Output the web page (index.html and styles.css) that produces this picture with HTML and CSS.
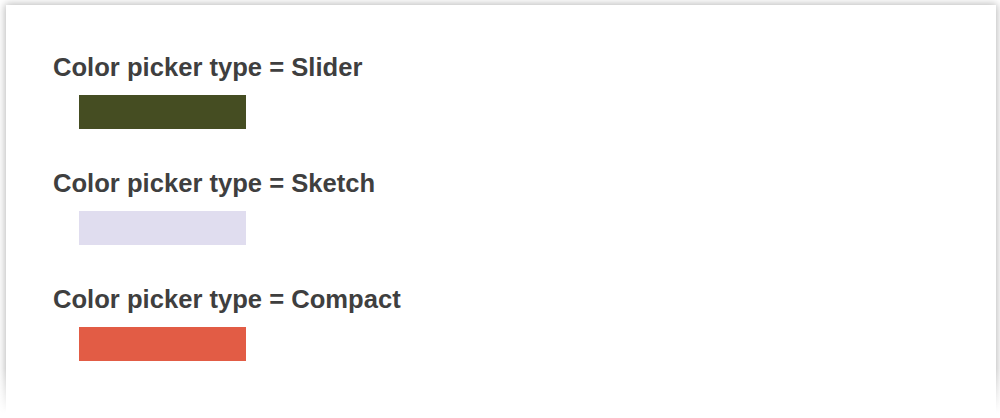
FILE: index.html
```html
<!DOCTYPE html>
<html>
<head>
<meta charset="utf-8">
<link rel="stylesheet" href="styles.css">
</head>
<body>
<div class="card">
  <section class="block">
    <h2 class="title">Color picker type = Slider</h2>
    <div class="swatch swatch-olive"></div>
  </section>
  <section class="block">
    <h2 class="title">Color picker type = Sketch</h2>
    <div class="swatch swatch-lavender"></div>
  </section>
  <section class="block">
    <h2 class="title">Color picker type = Compact</h2>
    <div class="swatch swatch-coral"></div>
  </section>
</div>
<div class="fade"></div>
</body>
</html>
```
FILE: styles.css
```css
html, body {
  margin: 0;
  padding: 0;
  background: #ffffff;
  overflow: hidden;
}
body {
  font-family: "Liberation Sans", Arial, sans-serif;
  height: 418px;
  position: relative;
}
.card {
  margin: 5px 4px 0 6px;
  padding: 47px 0 0 47px;
  background: #ffffff;
  box-shadow: 0 0 8px 1px rgba(0, 0, 0, 0.28);
  height: 413px;
  box-sizing: border-box;
  display: flex;
  flex-direction: column;
  gap: 39px;
}
.title {
  margin: 0;
  font-size: 25.6px;
  line-height: 30px;
  font-weight: bold;
  color: #3f3f3f;
}
.swatch {
  width: 167px;
  height: 34px;
  margin: 13px 0 0 26px;
}
.swatch-olive { background: #454d22; }
.swatch-lavender { background: #e0ddef; }
.swatch-coral { background: #e25c45; }
.fade {
  position: absolute;
  left: 0;
  right: 0;
  bottom: 0;
  height: 50px;
  background: linear-gradient(rgba(255, 255, 255, 0), #ffffff 90%);
}
```
